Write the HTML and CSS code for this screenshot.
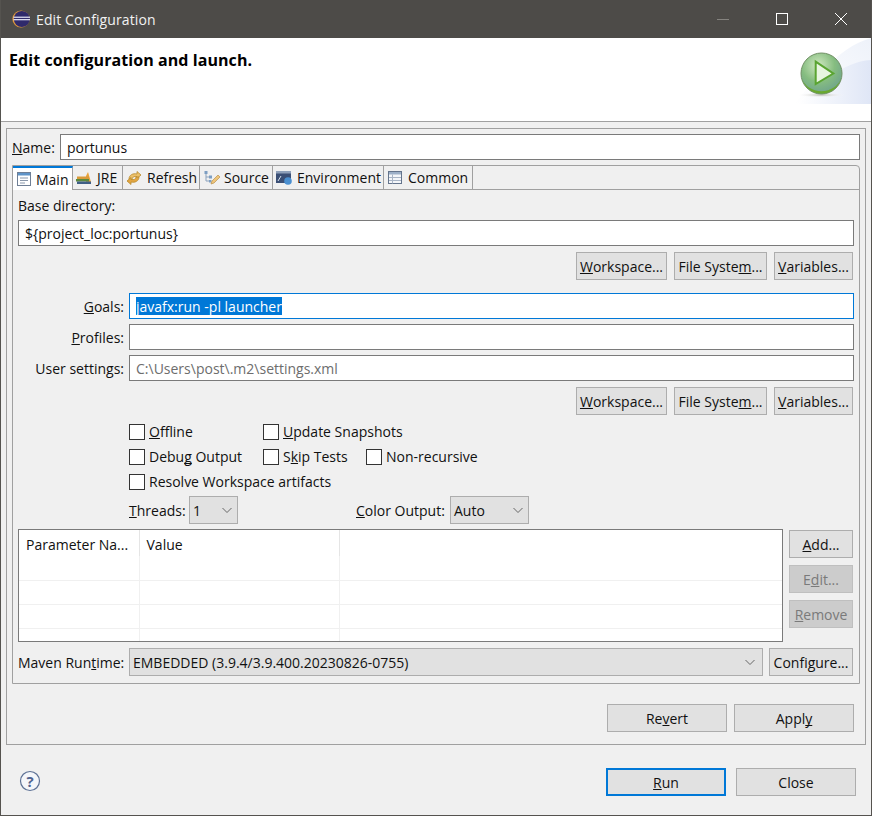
FILE: index.html
```html
<!DOCTYPE html>
<html lang="en">
<head>
    <meta charset="UTF-8">
    <title>Edit Configuration</title>
    <link rel="stylesheet" href="styles.css">
</head>
<body>
    <div class="window">
        <div class="titlebar">
            <svg class="app-icon" width="20" height="20" viewBox="0 0 20 20">
                <circle cx="10" cy="10" r="8.6" fill="#e39a3c"/>
                <circle cx="10.8" cy="10" r="8" fill="#2f2a6b"/>
                <rect x="2.4" y="7.6" width="16.6" height="1.3" fill="#d9d9ee"/>
                <rect x="2.4" y="10" width="16.6" height="1.3" fill="#d9d9ee"/>
            </svg>
            <span class="title-text">Edit Configuration</span>
            <div class="win-controls">
                <svg width="12" height="12" viewBox="0 0 12 12"><path d="M0 6.500h12" stroke="#85837f" fill="none"/></svg>
                <svg width="12" height="12" viewBox="0 0 12 12"><rect x=".5" y=".5" width="11" height="11" stroke="#fff" fill="none"/></svg>
                <svg width="12" height="12" viewBox="0 0 12 12"><path d="M0 0l12 12M12 0L0 12" stroke="#fff" fill="none"/></svg>
            </div>
        </div>

        <div class="banner">
            <h1>Edit configuration and launch.</h1>
            <svg class="banner-art" width="77" height="66" viewBox="0 0 77 66">
                <defs>
                    <linearGradient id="outer" x1="0" y1="1" x2="1" y2="0">
                        <stop offset="0" stop-color="#fff"/>
                        <stop offset="1" stop-color="#eef2fa"/>
                    </linearGradient>
                    <linearGradient id="inner" x1="0" y1="0" x2="1" y2="0">
                        <stop offset="0" stop-color="#fff"/>
                        <stop offset="1" stop-color="#dfe6f6"/>
                    </linearGradient>
                    <radialGradient id="ball" cx="0.42" cy="0.3" r="0.8">
                        <stop offset="0" stop-color="#cfe8c0"/>
                        <stop offset="0.5" stop-color="#86bd80"/>
                        <stop offset="0.8" stop-color="#74a98a"/>
                        <stop offset="1" stop-color="#5f9e3a"/>
                    </radialGradient>
                    <radialGradient id="shade" cx="0.5" cy="0.5" r="0.5">
                        <stop offset="0" stop-color="#b8b8b0"/>
                        <stop offset="1" stop-color="#fff" stop-opacity="0"/>
                    </radialGradient>
                </defs>
                <path d="M0 66C22 42 42 10 77 0V66Z" fill="url(#outer)"/>
                <path d="M4 66C30 44 48 24 77 22V66Z" fill="url(#inner)"/>
                <ellipse cx="27" cy="57" rx="24" ry="2.500" fill="url(#shade)"/>
                <circle cx="27.500" cy="35.500" r="20.500" fill="url(#ball)" stroke="#6f8f63"/>
                <path d="M8 40a20 20 0 0 0 39 0a20 17 0 0 1-39 0Z" fill="#6aa82e"/>
                <path d="M21.700 23.700L39.300 35.500 21.700 46Z" fill="#e8f5e0" stroke="#5aa431" stroke-width="2"/>
            </svg>
        </div>

        <div class="content">
            <div class="panel">
                <div class="name-row">
                    <label class="name-label"><u>N</u>ame:</label>
                    <input class="field" type="text" value="portunus">
                </div>

                <div class="folder">
                    <div class="tabstrip">
                        <div class="tab active">
                            <svg width="18" height="16" viewBox="0 0 18 16"><rect x="2.500" y="1.500" width="13" height="13" fill="#fff" stroke="#6f7f95"/><rect x="3" y="2" width="12" height="2.500" fill="#5f94c8"/><path d="M5 7h8M5 9.500h8M5 12h5" stroke="#8a98ab"/></svg>
                            Main
                        </div>
                        <div class="tab">
                            <svg width="18" height="16" viewBox="0 0 18 16"><path d="M11 6l2-4 3 10h-5Z" fill="#e9a33a"/><rect x="2" y="6.500" width="12" height="2.500" fill="#d99a3a"/><rect x="1" y="9" width="13" height="2.500" fill="#5c8a3e"/><rect x="2" y="11.500" width="14" height="2.500" fill="#3f5f86"/></svg>
                            JRE
                        </div>
                        <div class="tab">
                            <svg width="18" height="16" viewBox="0 0 18 16"><path d="M4 9c0-4 4-6 8-5V1.500L16 5l-4 3.500V6.500C9 6 7 7 7 10Z" fill="#ecc06a" stroke="#b98a2c" stroke-width=".8"/><path d="M14 7c0 4-4 6-8 5v2.500L2 11l4-3.500v2c3 .5 5-.5 5-2.500Z" fill="#e2a642" stroke="#b98a2c" stroke-width=".8"/></svg>
                            Refresh
                        </div>
                        <div class="tab">
                            <svg width="18" height="16" viewBox="0 0 18 16"><path d="M4 3v8h3M4 7h3" stroke="#8ba2bd" fill="none"/><rect x="2.500" y="1" width="3" height="3" fill="#7d9ec2"/><rect x="7" y="5.500" width="3" height="3" fill="#7d9ec2"/><rect x="7" y="10" width="2.500" height="2.500" fill="#7d9ec2"/><path d="M9 14l1-3 6-6 2 2-6 6Z" fill="#eec57a" stroke="#b9914e" stroke-width=".7"/></svg>
                            Source
                        </div>
                        <div class="tab">
                            <svg width="18" height="16" viewBox="0 0 18 16"><rect x="1" y="1" width="15" height="12" fill="#3b4f75"/><rect x="1" y="1" width="15" height="2.500" fill="#8fa0ba"/><path d="M3 11l3-5" stroke="#d9e2ee"/><circle cx="13" cy="11" r="3.800" fill="#4a8fd0"/></svg>
                            Environment
                        </div>
                        <div class="tab">
                            <svg width="18" height="16" viewBox="0 0 18 16"><rect x="2.500" y="1.500" width="13" height="12" fill="#f4f6f9" stroke="#64748c"/><rect x="3" y="2" width="12" height="2.500" fill="#9db0c8"/><path d="M6.500 4.500v9M3 7.500h12M3 10.500h12" stroke="#a9b5c6"/></svg>
                            Common
                        </div>
                    </div>

                    <div class="tab-body">
                        <div class="base-label">Base directory:</div>
                        <input class="field" type="text" value="${project_loc:portunus}">
                        <div class="button-row">
                            <button class="w-workspace"><u>W</u>orkspace...</button>
                            <button class="w-filesystem">File Syste<u>m</u>...</button>
                            <button class="w-variables"><u>V</u>ariables...</button>
                        </div>

                        <div class="form-row goals-row">
                            <label><u>G</u>oals:</label>
                            <div class="field focused"><span class="selection">javafx:run -pl launcher</span></div>
                        </div>
                        <div class="form-row">
                            <label><u>P</u>rofiles:</label>
                            <input class="field" type="text">
                        </div>
                        <div class="form-row">
                            <label>User settings:</label>
                            <input class="field muted" type="text" value="C:\Users\post\.m2\settings.xml">
                        </div>
                        <div class="button-row">
                            <button class="w-workspace"><u>W</u>orkspace...</button>
                            <button class="w-filesystem">File Syste<u>m</u>...</button>
                            <button class="w-variables"><u>V</u>ariables...</button>
                        </div>

                        <div class="options">
                            <div class="check-row">
                                <label class="check col-a"><input type="checkbox"><span><u>O</u>ffline</span></label>
                                <label class="check"><input type="checkbox"><span><u>U</u>pdate Snapshots</span></label>
                            </div>
                            <div class="check-row">
                                <label class="check col-a"><input type="checkbox"><span>Debu<u>g</u> Output</span></label>
                                <label class="check col-b"><input type="checkbox"><span>S<u>k</u>ip Tests</span></label>
                                <label class="check"><input type="checkbox"><span>Non-recursive</span></label>
                            </div>
                            <div class="check-row">
                                <label class="check"><input type="checkbox"><span>Resolve Workspace artifacts</span></label>
                            </div>
                        </div>

                        <div class="select-row">
                            <label class="threads-label"><u>T</u>hreads:</label>
                            <div class="select threads-select"><span>1</span>
                                <svg width="12" height="8" viewBox="0 0 12 8"><path d="M1.500 2l4.500 4.500L10.500 2" stroke="#666" fill="none"/></svg>
                            </div>
                            <label class="color-label"><u>C</u>olor Output:</label>
                            <div class="select color-select"><span>Auto</span>
                                <svg width="12" height="8" viewBox="0 0 12 8"><path d="M1.500 2l4.500 4.500L10.500 2" stroke="#666" fill="none"/></svg>
                            </div>
                        </div>

                        <div class="table-row">
                            <div class="table-box">
                                <table>
                                    <thead>
                                        <tr><th class="col-name">Parameter Na...</th><th class="col-value">Value</th><th></th></tr>
                                    </thead>
                                    <tbody>
                                        <tr><td></td><td></td><td></td></tr>
                                        <tr><td></td><td></td><td></td></tr>
                                        <tr><td></td><td></td><td></td></tr>
                                        <tr><td></td><td></td><td></td></tr>
                                    </tbody>
                                </table>
                            </div>
                            <div class="table-buttons">
                                <button><u>A</u>dd...</button>
                                <button class="disabled" disabled>E<u>d</u>it...</button>
                                <button class="disabled" disabled><u>R</u>emove</button>
                            </div>
                        </div>

                        <div class="runtime-row">
                            <label>Maven Run<u>t</u>ime:</label>
                            <div class="select runtime-select"><span>EMBEDDED (3.9.4/3.9.400.20230826-0755)</span>
                                <svg width="12" height="8" viewBox="0 0 12 8"><path d="M1.500 2l4.500 4.500L10.500 2" stroke="#666" fill="none"/></svg>
                            </div>
                            <button class="configure">Configure...</button>
                        </div>
                    </div>
                </div>

                <div class="panel-actions">
                    <button class="wide">Re<u>v</u>ert</button>
                    <button class="wide">Appl<u>y</u></button>
                </div>
            </div>

            <div class="footer">
                <svg class="help" width="22" height="22" viewBox="0 0 22 22">
                    <circle cx="11" cy="11" r="9.500" fill="#f4f6fa" stroke="#5d7195" stroke-width="1.200"/>
                    <text x="11" y="16.500" text-anchor="middle">?</text>
                </svg>
                <div class="footer-buttons">
                    <button class="wide default"><u>R</u>un</button>
                    <button class="wide">Close</button>
                </div>
            </div>
        </div>
    </div>
</body>
</html>
```

FILE: styles.css
```css
* {
    box-sizing: border-box;
}

body {
    margin: 0;
    font-family: 'Open Sans', 'Noto Sans', sans-serif;
    font-size: 14px;
    color: #111;
}

u {
    text-decoration-skip-ink: none;
}

.window {
    width: 872px;
    height: 816px;
    border: 1px solid #55534f;
    border-top: none;
    background-color: #f0f0f0;
    display: flex;
    flex-direction: column;
}

.titlebar {
    height: 38px;
    flex: none;
    background-color: #4d4b48;
    color: #f2f2f2;
    display: flex;
    align-items: center;
    padding-left: 10px;
}

.app-icon {
    margin-right: 5px;
}

.title-text {
    flex: 1;
    letter-spacing: 0.1px;
}

.win-controls {
    display: flex;
    gap: 47px;
    padding-right: 24px;
}

.banner {
    height: 84px;
    flex: none;
    background-color: #fff;
    border-bottom: 1px solid #a0a0a0;
    display: flex;
    justify-content: space-between;
    padding-left: 8px;
}

.banner h1 {
    margin: 11px 0 0;
    font-size: 16px;
    font-weight: 700;
    letter-spacing: 0.07px;
    color: #000;
}

.banner-art {
    align-self: flex-start;
}

.content {
    flex: 1;
    display: flex;
    flex-direction: column;
    padding: 6px 5px 0;
}

.panel {
    height: 617px;
    border: 1px solid #a0a0a0;
    padding: 5px 5px 0;
}

.name-row {
    display: flex;
    align-items: center;
    height: 26px;
}

.name-label {
    width: 48px;
    flex: none;
}

.field {
    display: block;
    width: 100%;
    height: 26px;
    border: 1px solid #7a7a7a;
    background-color: #fff;
    padding: 0 6px;
    font: inherit;
    color: inherit;
    line-height: 24px;
    outline: none;
}

.field.focused {
    border-color: #0078d7;
}

.field.muted {
    color: #6d6d6d;
}

.selection {
    display: block;
    width: fit-content;
    height: 18px;
    line-height: 19px;
    margin-top: 3px;
    background-color: #0078d7;
    color: #fff;
}

.folder {
    height: 519px;
    margin-top: 5px;
    border: 1px solid #a0a0a0;
    border-radius: 0 4px 0 0;
}

.tabstrip {
    display: flex;
    height: 24px;
    border-bottom: 1px solid #a0a0a0;
}

.tab {
    display: flex;
    align-items: center;
    gap: 4px;
    padding-left: 2px;
    height: 23px;
    border-right: 1px solid #a0a0a0;
    white-space: nowrap;
}

.tab:nth-child(1) { width: 60px; }
.tab:nth-child(2) { width: 50px; }
.tab:nth-child(3) { width: 77px; }
.tab:nth-child(4) { width: 73px; }
.tab:nth-child(5) { width: 111px; }
.tab:nth-child(6) { width: 89px; }

.tab.active {
    height: 24px;
    gap: 3px;
    background-color: #fff;
    border-top: 2px solid #0078d7;
    margin-bottom: -1px;
}

.tab-body {
    padding: 5px 5px 0;
}

.base-label {
    height: 25px;
    line-height: 21px;
}

.button-row {
    display: flex;
    justify-content: flex-end;
    gap: 7px;
    margin-top: 6px;
    padding-right: 1px;
}

button {
    height: 28px;
    padding: 0;
    border: 1px solid #adadad;
    background-color: #e1e1e1;
    font: inherit;
    color: inherit;
    white-space: nowrap;
}

button.w-workspace { width: 91px; }
button.w-filesystem { width: 93px; }
button.w-variables { width: 79px; }

button.disabled {
    background-color: #cccccc;
    border-color: #bfbfbf;
    color: #7a7a7a;
}

button.wide {
    width: 120px;
}

button.default {
    border: 2px solid #0078d7;
}

.form-row {
    display: flex;
    align-items: center;
    height: 26px;
    margin-top: 5px;
}

.form-row label {
    width: 111px;
    flex: none;
    padding-right: 5px;
    text-align: right;
}

.goals-row {
    margin-top: 13px;
}

.options {
    margin-top: 4px;
    padding-left: 111px;
}

.check-row {
    display: flex;
    height: 25px;
    align-items: center;
}

.check {
    display: flex;
    align-items: center;
    white-space: nowrap;
}

.check.col-a { width: 134px; }
.check.col-b { width: 103px; }

.check input {
    appearance: none;
    width: 16px;
    height: 16px;
    margin: 0 4px 0 0;
    border: 1px solid #333;
    background-color: #fff;
}

.select-row {
    display: flex;
    align-items: center;
    height: 28px;
    margin-top: 2px;
}

.threads-label {
    margin-left: 111px;
    width: 60px;
    flex: none;
}

.color-label {
    margin-left: 118px;
    width: 94px;
    flex: none;
}

.select {
    height: 28px;
    border: 1px solid #adadad;
    background-color: #e1e1e1;
    display: flex;
    align-items: center;
    justify-content: space-between;
    padding: 0 4px 0 3px;
    flex: none;
}

.threads-select { width: 49px; }
.color-select { width: 79px; }

.table-row {
    display: flex;
    margin-top: 5px;
}

.table-box {
    width: 765px;
    height: 113px;
    border: 1px solid #7a7a7a;
    background-color: #fff;
    overflow: hidden;
}

table {
    width: 763px;
    border-collapse: collapse;
    table-layout: fixed;
}

th {
    height: 26px;
    padding: 5px 0 0 7px;
    font-weight: 400;
    text-align: left;
    vertical-align: top;
    line-height: 20px;
    border-right: 1px solid #e5e5e5;
}

th:last-child,
td:last-child {
    border-right: none;
}

.col-name { width: 120px; }
.col-value { width: 200px; }

td {
    height: 24px;
    padding: 0;
    border-right: 1px solid #f0f0f0;
    border-bottom: 1px solid #f0f0f0;
}

.table-buttons {
    display: flex;
    flex-direction: column;
    gap: 7px;
    margin-left: 6px;
    padding-top: 1px;
}

.table-buttons button {
    width: 64px;
}

.runtime-row {
    display: flex;
    align-items: center;
    margin-top: 6px;
}

.runtime-row label {
    width: 111px;
    flex: none;
}

.runtime-select {
    width: 634px;
}

.runtime-select svg {
    margin-right: 2px;
}

.configure {
    width: 84px;
    margin-left: 6px;
}

.panel-actions {
    display: flex;
    justify-content: flex-end;
    gap: 7px;
    margin-top: 20px;
    padding-right: 6px;
}

.footer {
    display: flex;
    align-items: center;
    justify-content: space-between;
    height: 28px;
    margin-top: 23px;
    padding: 0 10px 0 13px;
}

.footer-buttons {
    display: flex;
    gap: 10px;
}

.help {
    margin-bottom: 2px;
}

.help text {
    font-size: 15px;
    font-weight: 700;
    fill: #4f6390;
}
```
